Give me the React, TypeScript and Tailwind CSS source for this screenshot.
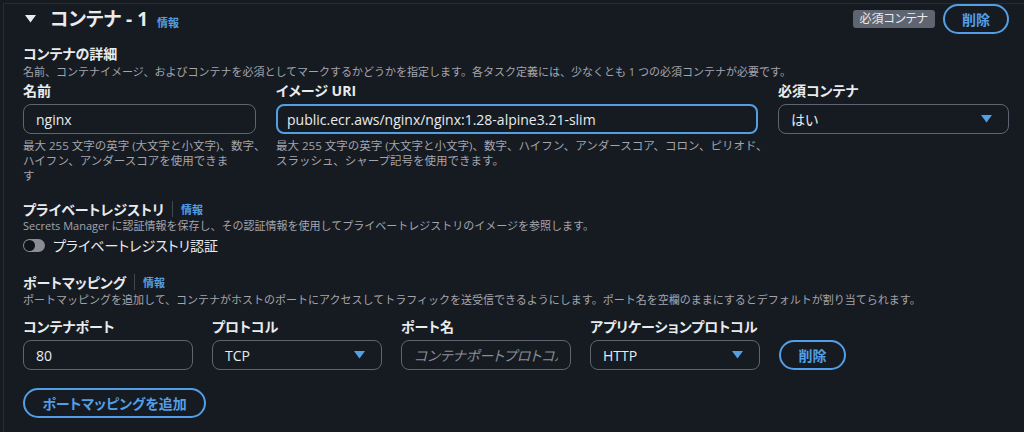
import React from 'react';

const font = { fontFamily: '"Open Sans", "Noto Sans CJK JP", sans-serif' };

function Caret({ className = '' }: { className?: string }) {
  return (
    <svg width="11" height="8" viewBox="0 0 11 8" className={className}>
      <polygon points="0,0 11,0 5.5,7.5" fill="currentColor" />
    </svg>
  );
}

function Info() {
  return <a className="text-[11px] font-bold text-[#539fe5] leading-none">情報</a>;
}

function Label({ children }: { children: React.ReactNode }) {
  return <div className="text-[14px] font-bold leading-[20px] text-[#e9ebed] mb-[3px] whitespace-nowrap">{children}</div>;
}

function TextInput({ value, placeholder, focused }: { value?: string; placeholder?: string; focused?: boolean }) {
  return (
    <input
      readOnly
      defaultValue={value}
      placeholder={placeholder}
      className={
        'w-full h-[30px] rounded-lg bg-transparent px-3 text-[14px] text-[#e9ebed] outline-none placeholder:italic placeholder:text-[#8c8c94] ' +
        (focused ? 'border-2 border-[#539fe5] pl-[9px]' : 'border border-[#5f6570]')
      }
    />
  );
}

function Select({ value }: { value: string }) {
  return (
    <div className="w-full h-[30px] rounded-lg border border-[#5f6570] flex items-center justify-between pl-3 pr-4">
      <span className="text-[14px] text-[#e9ebed]">{value}</span>
      <Caret className="text-[#539fe5]" />
    </div>
  );
}

function OutlineButton({ children, className = '' }: { children: React.ReactNode; className?: string }) {
  return (
    <button className={'h-[30px] rounded-full border-2 border-[#539fe5] text-[14px] font-bold text-[#539fe5] ' + className}>
      {children}
    </button>
  );
}

function Help({ children }: { children: React.ReactNode }) {
  return (
    <div className="mt-1 text-[11.5px] leading-[15px] text-[#a4a4ad] whitespace-nowrap [font-feature-settings:normal]">
      {children}
    </div>
  );
}

function Desc({ children }: { children: React.ReactNode }) {
  return (
    <div className="text-[11px] leading-[16px] text-[#a4a4ad] [font-feature-settings:normal]">{children}</div>
  );
}

export default function App() {
  return (
    <div
      className="w-[1024px] h-[432px] bg-[#161b22] overflow-hidden pl-[3px] pt-[3px] [font-feature-settings:'palt']"
      style={font}
    >
      <div className="h-full border-l border-t border-[#262c35] pl-[19px] pr-[15px]">
        {/* Header */}
        <div className="flex items-center justify-between h-[29px] pt-[1px]">
          <div className="flex items-center">
            <Caret className="text-[#e9ebed] ml-[2px] mr-[14px] w-[11px]" />
            <h2 className="text-[19px] font-bold text-[#e9ebed] leading-none">コンテナ - 1</h2>
            <span className="ml-[9px] mt-[3px]"><Info /></span>
          </div>
          <div className="flex items-center gap-2">
            <span className="bg-[#5f6570] text-[#e9ebed] text-[12px] leading-[18px] px-[7px] rounded-[3px]">必須コンテナ</span>
            <OutlineButton className="w-[66px] h-[29px]">削除</OutlineButton>
          </div>
        </div>

        {/* Container details */}
        <div className="mt-[11px]">
          <div className="text-[14px] font-bold leading-[20px] text-[#e9ebed]">コンテナの詳細</div>
          <Desc>
            名前、コンテナイメージ、およびコンテナを必須としてマークするかどうかを指定します。各タスク定義には、少なくとも 1 つの必須コンテナが必要です。
          </Desc>
        </div>
        <div className="grid grid-cols-[233px_482px_231px] gap-x-5 mt-[1px]">
          <div>
            <Label>名前</Label>
            <TextInput value="nginx" />
            <Help>
              最大 255 文字の英字 (大文字と小文字)、数字、
              <br />
              ハイフン、アンダースコアを使用できま
              <br />す
            </Help>
          </div>
          <div>
            <Label>イメージ URI</Label>
            <TextInput value="public.ecr.aws/nginx/nginx:1.28-alpine3.21-slim" focused />
            <Help>
              最大 255 文字の英字 (大文字と小文字)、数字、ハイフン、アンダースコア、コロン、ピリオド、
              <br />
              スラッシュ、シャープ記号を使用できます。
            </Help>
          </div>
          <div>
            <Label>必須コンテナ</Label>
            <Select value="はい" />
          </div>
        </div>

        {/* Private registry */}
        <div className="mt-[17px]">
          <div className="flex items-center h-[18px]">
            <span className="text-[14px] font-bold text-[#e9ebed]">プライベートレジストリ</span>
            <span className="mx-[8px] h-[16px] w-px bg-[#424650]" />
            <Info />
          </div>
          <Desc>
            Secrets Manager に認証情報を保存し、その認証情報を使用してプライベートレジストリのイメージを参照します。
          </Desc>
          <div className="flex items-center h-[20px] mt-[1px]">
            <span className="relative w-[22px] h-[13px] rounded-full bg-[#8c8c94]">
              <span className="absolute left-[1px] top-[1px] w-[11px] h-[11px] rounded-full bg-[#0f141a]" />
            </span>
            <span className="ml-[8px] text-[14px] text-[#e9ebed]">プライベートレジストリ認証</span>
          </div>
        </div>

        {/* Port mappings */}
        <div className="mt-[17px]">
          <div className="flex items-center h-[20px]">
            <span className="text-[14px] font-bold text-[#e9ebed]">ポートマッピング</span>
            <span className="mx-[8px] h-[16px] w-px bg-[#424650]" />
            <Info />
          </div>
          <Desc>
            ポートマッピングを追加して、コンテナがホストのポートにアクセスしてトラフィックを送受信できるようにします。ポート名を空欄のままにするとデフォルトが割り当てられます。
          </Desc>
        </div>
        <div className="flex items-end gap-[19px] mt-[9px]">
          <div className="w-[170px]">
            <Label>コンテナポート</Label>
            <TextInput value="80" />
          </div>
          <div className="w-[170px]">
            <Label>プロトコル</Label>
            <Select value="TCP" />
          </div>
          <div className="w-[170px]">
            <Label>ポート名</Label>
            <TextInput placeholder="コンテナポートプロトコル" />
          </div>
          <div className="w-[170px]">
            <Label>アプリケーションプロトコル</Label>
            <Select value="HTTP" />
          </div>
          <OutlineButton className="w-[67px]">削除</OutlineButton>
        </div>
        <OutlineButton className="mt-[18px] w-[183px]">ポートマッピングを追加</OutlineButton>
      </div>
    </div>
  );
}
